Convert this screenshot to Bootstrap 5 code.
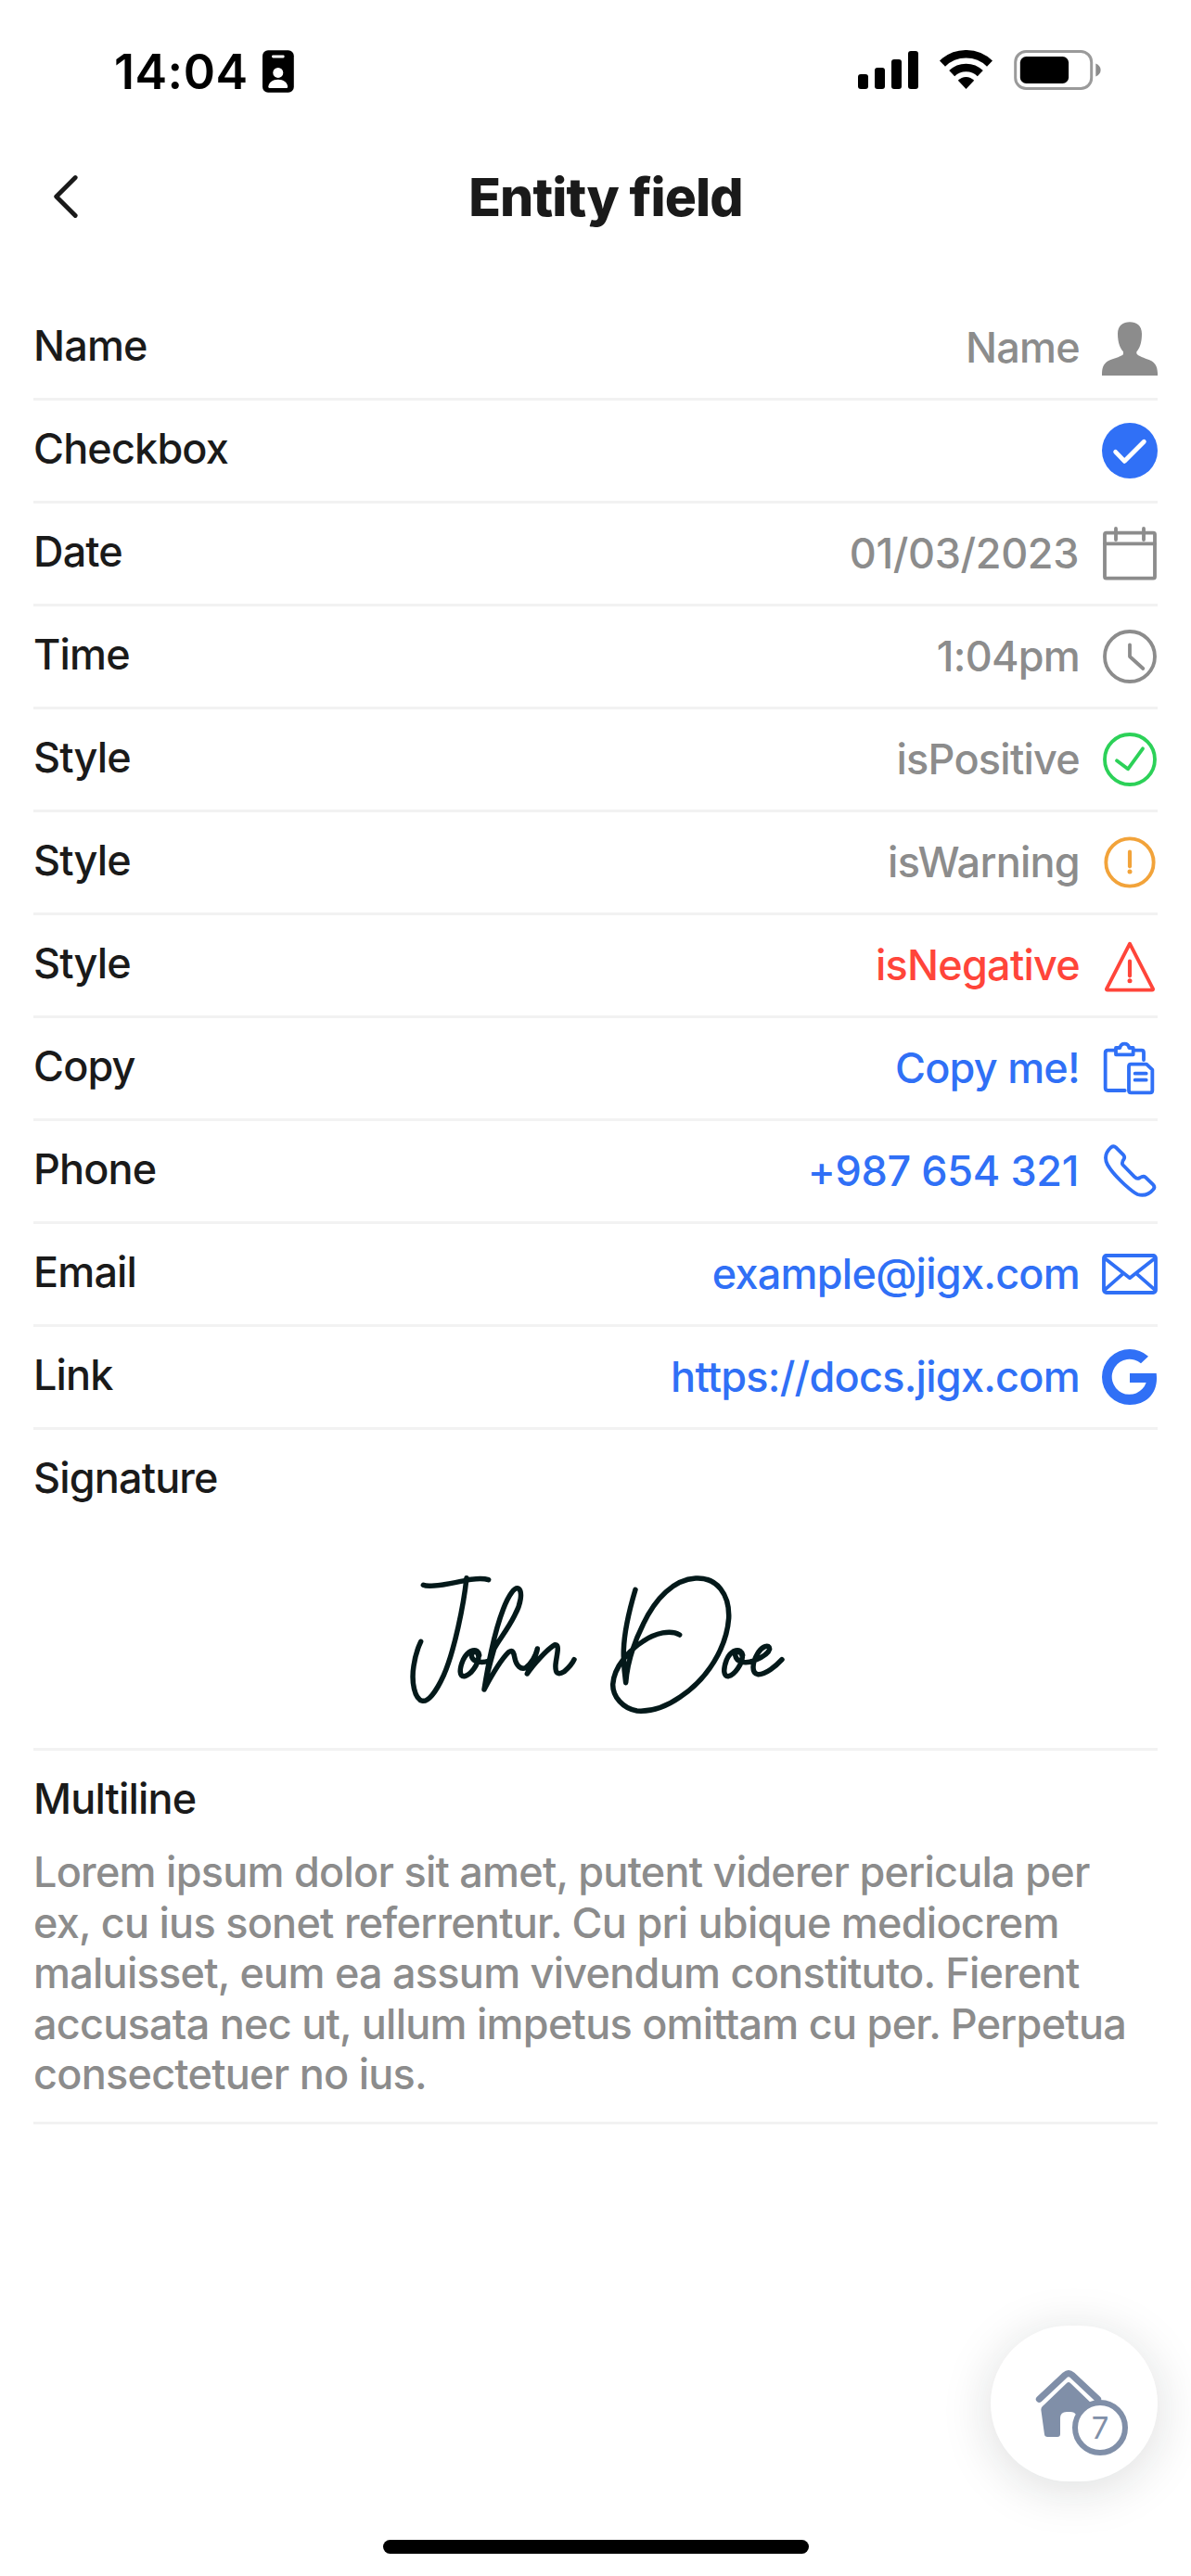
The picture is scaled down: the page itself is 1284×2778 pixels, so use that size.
<!DOCTYPE html>
<html lang="en">
<head>
<meta charset="utf-8">
<meta name="viewport" content="width=device-width, initial-scale=1">
<title>Entity field</title>
<link href="https://cdn.jsdelivr.net/npm/bootstrap@5.3.0/dist/css/bootstrap.min.css" rel="stylesheet">
<style>
  :root { --ink:#1a1a1a; --muted:#8c8c8c; --accent:#3070f6; --line:#f2f2f2; --ok:#2cd158; --warn:#f2a33a; --neg:#ff453a; --slate:#808fa8; }
  body { font-family:Inter,"Liberation Sans",sans-serif; font-size:45px; font-weight:500; color:var(--ink); font-kerning:normal; }
  .screen { width:1284px; height:2778px; overflow:hidden; }
  .status { height:150px; padding:4px 97px 0 123px; color:#000; }
  .clock { font-size:52px; font-weight:600; letter-spacing:.5px; line-height:1; margin-right:15px; padding-top:2px; }
  .topbar { height:124px; padding:0 62px 0 57px; }
  .topbar h1 { font-size:57px; font-weight:800; letter-spacing:-.93px; line-height:124px; padding-top:1px; }
  .fields { padding:47px 36px 0; }
  .field { border-bottom:3px solid var(--line); }
  .line-item { height:111px; }
  .field-label { line-height:103px; letter-spacing:-.85px; }
  .field-value { line-height:108px; letter-spacing:-.75px; color:var(--muted); margin-right:24px; }
  .num { letter-spacing:-.38px; margin-right:25px; }
  .accent { color:var(--accent); }
  .neg { color:var(--neg); }
  .ico { width:60px; height:60px; fill:none; stroke:currentColor; stroke-width:11.5; stroke-linecap:round; stroke-linejoin:round; }
  .ico .solid { fill:currentColor; stroke:none; }
  .c-muted { color:var(--muted); } .c-ok { color:var(--ok); } .c-warn { color:var(--warn); }
  .sign { height:346px; }
  .sign svg { margin-top:25px; fill:none; stroke:#04191a; stroke-width:16.5; stroke-linecap:round; stroke-linejoin:round; }
  .multi { height:403px; }
  .multi p { padding-top:1px; line-height:54.5px; letter-spacing:-.75px; color:var(--muted); }
  .fab { width:180px; height:168px; right:36px; bottom:102px; border-radius:84px; background:#fff; box-shadow:0 8px 54px rgba(20,30,30,.15); }
  .fab-count { left:88px; top:80px; width:60px; height:60px; border:6px solid var(--slate); background:#fff; color:var(--slate); font-size:33px; font-weight:400; line-height:1; }
  .home-bar { width:459px; height:15px; left:413px; bottom:24px; background:#000; }
</style>
</head>
<body class="bg-white">
<main class="screen position-relative d-flex flex-column bg-white">
  <div class="status d-flex align-items-center">
    <span class="clock">14:04</span>
    <svg width="34" height="46" viewBox="283 54 34 46">
      <rect x="283" y="54.3" width="33.8" height="45.5" rx="6"/>
      <rect x="293" y="59.6" width="13.7" height="2.8" rx="1.4" fill="#fff"/>
      <circle cx="299.8" cy="78.4" r="5.5" fill="#fff"/>
      <path d="M289.3 93.5C289.6 89 294 85.7 299.8 85.7S309.900 89 310.200 93.500Q310.200 95 308.700 95H290.800Q289.300 95 289.300 93.500Z" fill="#fff"/>
    </svg>
    <svg class="ms-auto" width="262" height="46" viewBox="925 54 262 46">
      <rect x="925" y="80" width="11" height="16" rx="3"/><rect x="943" y="73" width="11" height="23" rx="3"/>
      <rect x="961" y="64" width="11" height="32" rx="3"/><rect x="979" y="55" width="11" height="41" rx="3"/>
      <g fill="none" stroke="#000" stroke-width="8.600">
        <path d="M1016 68.600A36.700 36.700 0 0 1 1067 68.600"/>
        <path d="M1026.200 79.200A22 22 0 0 1 1056.800 79.200"/>
      </g>
      <path d="M1032.800 86.800Q1036.500 83 1041.500 83T1050.200 86.800L1041.500 96Z"/>
      <rect x="1094.700" y="55.500" width="82" height="40" rx="11.500" fill="none" stroke="#9a9a9a" stroke-width="3"/>
      <rect x="1099.800" y="61" width="52.300" height="29" rx="6.500"/>
      <path d="M1181.300 68.500Q1186.600 70.800 1186.600 75.500T1181.300 82.500Z" fill="#8c8c8c"/>
    </svg>
  </div>

  <header class="topbar d-flex align-items-center">
    <svg width="27" height="48" viewBox="57 188 27 48" fill="none" stroke="#1a1a1a" stroke-width="4.800" stroke-linecap="round" stroke-linejoin="round"><path d="M81.200 191.500L60.700 212L81.200 232.500"/></svg>
    <h1 class="flex-grow-1 text-center mb-0">Entity field</h1>
  </header>

  <section class="fields">
    <div class="field line-item d-flex">
      <span class="field-label me-auto">Name</span><span class="field-value">Name</span>
      <svg class="ico c-muted align-self-center" viewBox="912 75 180 180"><path class="solid" d="M912 255V247C913 225 920 213 938 205C953 199 978 192 981 186V178C972 168 963 150 963 120C963 94 980 82 1002 82S1041 94 1041 120C1041 150 1033 168 1024 178V184C1028 192 1050 199 1066 205C1084 213 1091 225 1092 247V255Z"/></svg>
    </div>
    <div class="field line-item d-flex">
      <span class="field-label me-auto">Checkbox</span>
      <svg class="ico accent align-self-center" viewBox="912 408 180 180"><circle class="solid" cx="1002" cy="498" r="90"/><path d="M956 502L985 532L1048 469" stroke="#fff" stroke-width="14.500"/></svg>
    </div>
    <div class="field line-item d-flex">
      <span class="field-label me-auto">Date</span><span class="field-value num">01/03/2023</span>
      <svg class="ico c-muted align-self-center" viewBox="912 741 180 180"><rect x="921" y="764" width="162" height="147" rx="5"/><path d="M921 799H1083M957 750V786M1047 750V786"/></svg>
    </div>
    <div class="field line-item d-flex">
      <span class="field-label me-auto">Time</span><span class="field-value">1:04pm</span>
      <svg class="ico c-muted align-self-center" viewBox="912 1074 180 180"><circle cx="1002" cy="1164" r="81"/><path d="M1002 1126V1164L1045 1203"/></svg>
    </div>
    <div class="field line-item d-flex">
      <span class="field-label me-auto">Style</span><span class="field-value">isPositive</span>
      <svg class="ico c-ok align-self-center" viewBox="912 87 180 180"><circle cx="1002" cy="177" r="81"/><path d="M960 181L996 208L1044 142"/></svg>
    </div>
    <div class="field line-item d-flex">
      <span class="field-label me-auto">Style</span><span class="field-value">isWarning</span>
      <svg class="ico c-warn align-self-center" viewBox="912 420 180 180"><circle cx="1002" cy="510" r="77"/><path d="M1002 476V523" stroke-width="12.500"/><circle class="solid" cx="1002" cy="540" r="7.500"/></svg>
    </div>
    <div class="field line-item d-flex">
      <span class="field-label me-auto">Style</span><span class="field-value neg">isNegative</span>
      <svg class="ico neg align-self-center" viewBox="912 753 180 180"><path d="M1002 773L1077 919Q1078 923 1074 923H930Q926 923 927 919Z"/><path d="M1002 830V877" stroke-width="12.500"/><circle class="solid" cx="1002" cy="893" r="7.500"/></svg>
    </div>
    <div class="field line-item d-flex">
      <span class="field-label me-auto">Copy</span><span class="field-value accent">Copy me!</span>
      <svg class="ico accent align-self-center" viewBox="912 1086 180 180"><path d="M1047 1149V1125Q1047 1118 1040 1118H1018M952 1118H931Q923 1118 923 1126V1240Q923 1248 931 1248H986M957 1132V1110H970Q973 1097 985 1097T1000 1110H1013V1132ZM1006 1163H1056L1075 1181V1248Q1075 1255 1068 1255H1006Q999 1255 999 1248V1170Q999 1163 1006 1163ZM1019 1193H1055M1019 1214H1055"/></svg>
    </div>
    <div class="field line-item d-flex">
      <span class="field-label me-auto">Phone</span><a href="#" class="field-value num accent text-decoration-none">+987 654 321</a>
      <svg class="ico accent align-self-center" viewBox="912 99 180 180"><path d="M941 112Q950 106 957 112L981 136Q987 142 983 150Q975 160 979 168L1018 208Q1025 216 1035 210Q1046 203 1053 209L1077 232Q1085 240 1078 248Q1057 273 1027 264Q1015 259 985 232Q945 195 930 168Q914 137 941 112Z"/></svg>
    </div>
    <div class="field line-item d-flex">
      <span class="field-label me-auto">Email</span><a href="#" class="field-value accent text-decoration-none">example@jigx.com</a>
      <svg class="ico accent align-self-center" viewBox="912 432 180 180"><rect x="918" y="462" width="168" height="120" rx="8"/><path d="M922 472L1002 535L1082 472M922 572L980 521M1082 572L1024 521"/></svg>
    </div>
    <div class="field line-item d-flex">
      <span class="field-label me-auto">Link</span><a href="#" class="field-value accent text-decoration-none">https://docs.jigx.com</a>
      <svg class="ico accent align-self-center" viewBox="912 765 180 180"><path class="solid" d="M1062 788L1038 811A57 57 0 1 0 1055 873H1002V843H1088C1096 905 1058 945 1002 945A90 90 0 1 1 1002 765Q1035 765 1062 788Z"/></svg>
    </div>
    <div class="field sign d-flex flex-column">
      <span class="field-label">Signature</span>
      <svg class="align-self-center" width="450" height="200" viewBox="-9 0 1350 600" role="img" aria-label="Signature">
        <path d="M109 118C130 128 200 112 245 103C275 97 305 96 320 101"/>
        <path d="M249 95C240 180 210 330 175 410C150 465 125 495 107 493C80 488 70 430 78 380C83 345 92 320 101 301"/>
        <path d="M290 345C286 320 255 325 238 360C225 390 225 415 242 413C262 410 287 375 288 350C286 330 268 328 265 345C265 362 290 374 322 363"/>
        <path d="M306 456C318 380 335 280 368 195C385 150 405 122 418 130C430 140 425 180 405 215C380 265 350 300 338 325C325 370 312 420 306 456C325 420 360 360 385 335C400 325 402 340 405 355C410 380 425 392 440 386C460 370 472 350 478 324C475 345 455 385 445 405C465 375 510 325 535 311C552 310 540 345 537 375C535 405 545 410 565 398C580 385 592 370 597 359"/>
        <path d="M795 133C775 200 755 290 757 350C758 390 762 420 764 434C768 380 785 315 820 245C860 160 920 100 990 96C1060 92 1100 150 1097 225C1090 320 1030 420 940 480C890 515 840 528 800 525C755 518 722 480 722 440C725 380 780 325 820 300C860 272 910 262 938 279"/>
        <path d="M1142 345C1137 320 1105 325 1090 360C1078 392 1080 415 1096 413C1118 408 1140 372 1141 350C1138 330 1120 328 1118 345C1122 368 1150 374 1180 362C1205 352 1226 338 1229 325C1228 308 1205 315 1190 340C1172 370 1170 405 1192 407C1215 408 1250 380 1269 359"/>
      </svg>
    </div>
    <div class="field multi">
      <div class="field-label">Multiline</div>
      <p class="mb-0 text-nowrap">Lorem ipsum dolor sit amet, putent viderer pericula per<br>ex, cu ius sonet referrentur. Cu pri ubique mediocrem<br>maluisset, eum ea assum vivendum constituto. Fierent<br>accusata nec ut, ullum impetus omittam cu per. Perpetua<br>consectetuer no ius.</p>
    </div>
  </section>

  <div class="fab position-absolute">
    <svg class="d-block" width="180" height="168" viewBox="84 84 540 504" fill="#808fa8">
      <path d="M241 322L324 244Q336 234 348 244L431 322" fill="none" stroke="#808fa8" stroke-width="21" stroke-linecap="round"/>
      <path d="M330 270Q336 264 342 270L420 345V372H360Q355 363 342 363H330Q309 364 309 383V435Q309 444 300 444H268Q259 444 258 436L247 356Q247 350 251 346Z"/>
    </svg>
    <span class="fab-count position-absolute rounded-circle d-flex align-items-center justify-content-center">7</span>
  </div>
  <div class="home-bar position-absolute rounded-pill"></div>
</main>
<script src="https://cdn.jsdelivr.net/npm/bootstrap@5.3.0/dist/js/bootstrap.bundle.min.js"></script>
</body>
</html>
